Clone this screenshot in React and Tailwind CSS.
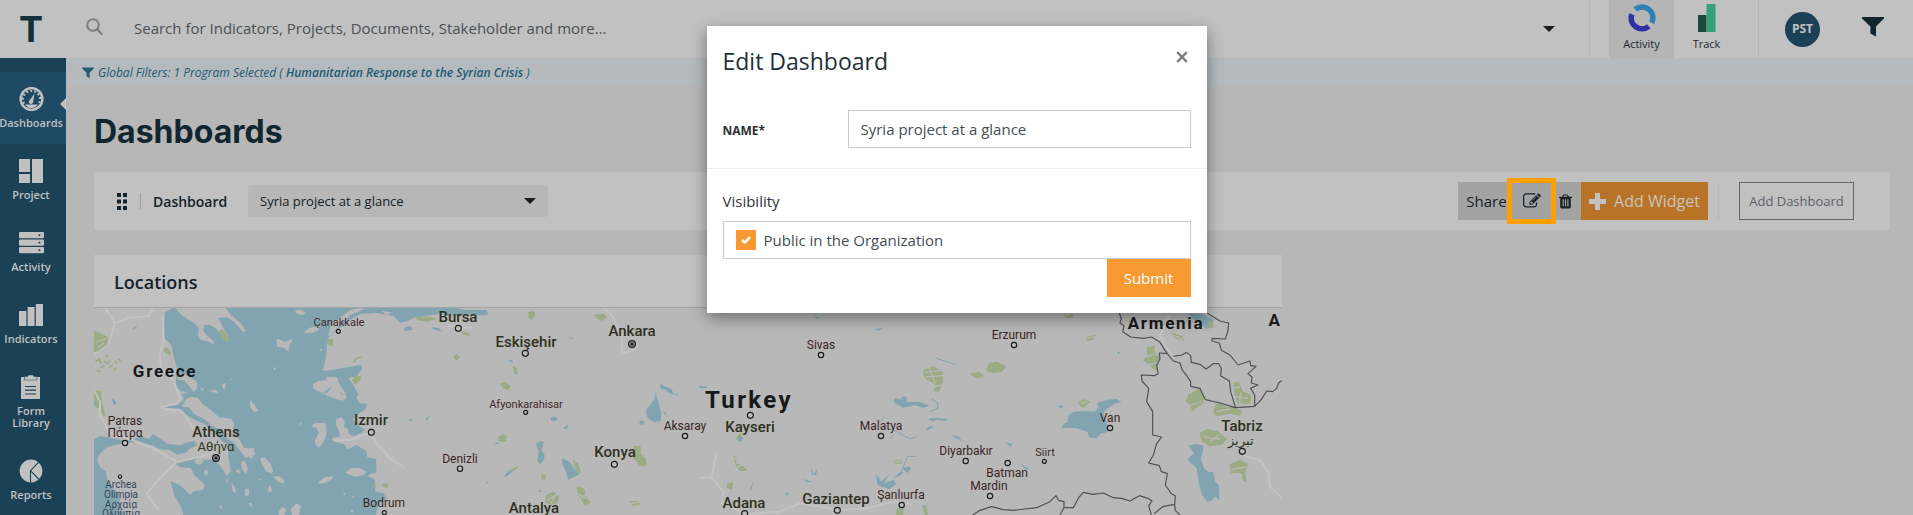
import React from "react";

/* ---------- icons ---------- */

function SearchIcon() {
  return (
    <svg width="18" height="18" viewBox="0 0 18 18" fill="none" stroke="#7d7d7d" strokeWidth="2" aria-hidden="true">
      <circle cx="7" cy="7" r="5.8" />
      <path d="M11.2 11.2 L15.6 16" strokeLinecap="round" />
    </svg>
  );
}

function Funnel({ size, color }) {
  return (
    <svg width={size} height={size} viewBox="0 0 22 22" fill={color} aria-hidden="true">
      <path d="M0 1 H22 V2.4 L14 10.6 V20.6 L8.4 17.4 V10.6 L0 2.4 Z" />
    </svg>
  );
}

function Caret() {
  return (
    <svg width="12" height="6" viewBox="0 0 12 6" fill="#191d1f" aria-hidden="true">
      <path d="M0 0 H12 L6 6 Z" />
    </svg>
  );
}

function GaugeIcon() {
  return (
    <svg width="25" height="24" viewBox="0 0 25 24" fill="none" aria-hidden="true">
      <circle cx="12.5" cy="12" r="10.9" stroke="#c1c1c1" strokeWidth="2.4" />
      <path d="M5 16.6 A8.6 8.6 0 1 1 20 16.6" stroke="#c1c1c1" strokeWidth="2.2" strokeDasharray="2 2.1" />
      <path d="M6 17.6 H19 L16 20.4 Q12.5 21.8 9 20.4 Z" fill="#c1c1c1" />
      <path d="M15.6 6.6 L14.2 14.6 A2.2 2.2 0 1 1 10.8 13 Z" fill="#c1c1c1" />
    </svg>
  );
}

function BlocksIcon() {
  return (
    <svg width="24" height="24" viewBox="0 0 24 24" fill="#c1c1c1" aria-hidden="true">
      <path d="M0 0 H11 V13 H0 Z M0 15 H11 V24 H0 Z M13 0 H24 V24 H13 Z" />
    </svg>
  );
}

function ServerIcon() {
  return (
    <svg width="25" height="24" viewBox="0 0 25 24" aria-hidden="true">
      {[1, 8.5, 16].map((y) => (
        <g key={y}>
          <rect x="0" y={y} width="25" height="6.2" rx="1" fill="#c1c1c1" />
          <rect x="19.6" y={y + 2.3} width="1.7" height="1.7" fill="#1a4156" />
        </g>
      ))}
    </svg>
  );
}

function BarsIcon() {
  return (
    <svg width="24" height="24" viewBox="0 0 24 24" fill="#c1c1c1" aria-hidden="true">
      <path d="M0 8 H7.4 V23 H0 Z M8.6 4 H15.6 V23 H8.6 Z M16.8 1 H24 V23 H16.8 Z" />
    </svg>
  );
}

function ClipboardIcon() {
  return (
    <svg width="20" height="24" viewBox="0 0 20 24" aria-hidden="true">
      <path d="M0 2 H19 V24 H0 Z" fill="#c1c1c1" />
      <path d="M3.6 1.6 H6.4 Q6.8 0 8 0 H11.6 Q12.6 0 13 1.6 H15.8 V5 H3.6 Z" fill="#c1c1c1" stroke="#1a4156" strokeWidth=".5" />
      <path d="M4 11.5 H15 M4 15.2 H15 M4 19 H15" stroke="#1a4156" strokeWidth="1.2" />
    </svg>
  );
}

function PieIcon() {
  return (
    <svg width="24" height="24" viewBox="0 0 24 24" aria-hidden="true">
      <circle cx="12" cy="12" r="11.4" fill="#c1c1c1" />
      <path d="M11.5 24 V11.6 L19.4 3.4 M11.5 11.6 L20 20.4" stroke="#1a4156" strokeWidth="1.1" fill="none" />
    </svg>
  );
}

function ActivityLogo() {
  return (
    <svg width="28" height="28" viewBox="0 0 28 28" fill="none" strokeWidth="5.6" aria-hidden="true">
      <path d="M7.2 5.4 A10.8 10.8 0 0 1 23.6 18.8" stroke="#2f81b3" />
      <path d="M3.9 10.2 A10.8 10.8 0 0 0 20.8 22.4" stroke="#2d32a3" />
    </svg>
  );
}

function TrackLogo() {
  return (
    <svg width="18" height="28" viewBox="0 0 18 28" aria-hidden="true">
      <path d="M0 11 H8.5 V28 H0 Z" fill="#1a4a3c" />
      <path d="M8.5 0 H17.5 V28 H8.5 Z" fill="#34a179" />
    </svg>
  );
}

function GripIcon() {
  return (
    <svg width="10" height="17" viewBox="0 0 10 17" fill="#12222a" aria-hidden="true">
      <path d="M0 0h4v4h-4z M6 0h4v4h-4z M0 6.5h4v4h-4z M6 6.5h4v4h-4z M0 13h4v4h-4z M6 13h4v4h-4z" />
    </svg>
  );
}

function PencilSquareIcon() {
  return (
    <svg width="18" height="18" viewBox="0 0 1792 1792" fill="#1b2226" aria-hidden="true">
      <path d="M888 1184l116-116-152-152-116 116v56h96v96h56zm440-720q-16-16-33 1l-350 350q-17 17-1 33t33-1l350-350q17-17 1-33zm80 594v190q0 119-84.5 203.5t-203.5 84.5h-832q-119 0-203.5-84.5t-84.5-203.5v-832q0-119 84.5-203.5t203.5-84.5h832q63 0 117 25 15 7 18 23 3 17-9 29l-49 49q-14 14-32 8-23-6-45-6h-832q-66 0-113 47t-47 113v832q0 66 47 113t113 47h832q66 0 113-47t47-113v-126q0-13 9-22l64-64q15-15 35-7t20 29zm-96-738l288 288-672 672h-288v-288zm444 132l-92 92-288-288 92-92q28-28 68-28t68 28l152 152q28 28 28 68t-28 68z" />
    </svg>
  );
}

function TrashIcon() {
  return (
    <svg width="13" height="15" viewBox="192 128 1408 1536" fill="#1b2226" aria-hidden="true">
      <path d="M704 1376v-704q0-14-9-23t-23-9h-64q-14 0-23 9t-9 23v704q0 14 9 23t23 9h64q14 0 23-9t9-23zm256 0v-704q0-14-9-23t-23-9h-64q-14 0-23 9t-9 23v704q0 14 9 23t23 9h64q14 0 23-9t9-23zm256 0v-704q0-14-9-23t-23-9h-64q-14 0-23 9t-9 23v704q0 14 9 23t23 9h64q14 0 23-9t9-23zm-544-992h448l-48-117q-7-9-17-11h-317q-10 2-17 11zm928 32v64q0 14-9 23t-23 9h-96v948q0 83-47 143.5t-113 60.5h-832q-66 0-113-58.5t-47-141.5v-952h-96q-14 0-23-9t-9-23v-64q0-14 9-23t23-9h309l70-167q15-37 54-63t79-26h320q40 0 79 26t54 63l70 167h309q14 0 23 9t9 23z" />
    </svg>
  );
}

/* ---------- header ---------- */

function Header() {
  return (
    <header className="flex h-[58px] shrink-0 items-center bg-[#c1c1c1]">
      <a href="#home" aria-label="Home" className="flex w-[66px] shrink-0 justify-center pr-1 font-['Inter',sans-serif] text-4xl leading-none font-bold text-[#12303d]">
        T
      </a>
      <label htmlFor="global-search" className="pb-1 pl-5" aria-label="Search">
        <SearchIcon />
      </label>
      <input
        id="global-search"
        type="text"
        placeholder="Search for Indicators, Projects, Documents, Stakeholder and more..."
        className="ml-[30px] min-w-0 flex-1 bg-transparent pb-[2px] text-[15px] text-[#3c4347] outline-none placeholder:text-[#4a5054]"
      />
      <button type="button" aria-label="Search options" className="mr-[34px] shrink-0">
        <Caret />
      </button>
      <nav className="flex h-full shrink-0 border-x border-[#b6b6b6] px-[19px] text-[11px] leading-4 text-[#1c2a31]">
        <a href="#activity" className="flex h-full w-[65px] flex-col items-center gap-1 bg-[#b5b5b5] pt-1">
          <ActivityLogo />
          Activity
        </a>
        <a href="#track" className="flex h-full w-[65px] flex-col items-center gap-1 pt-1">
          <TrackLogo />
          Track
        </a>
      </nav>
      <button type="button" className="ml-[26px] size-[35px] shrink-0 rounded-full bg-[#1a4156] text-xs font-bold text-[#c1c1c1]">
        PST
      </button>
      <button type="button" aria-label="Filters" className="mr-[29px] ml-[42px] shrink-0 pb-1">
        <Funnel size={22} color="#12262f" />
      </button>
    </header>
  );
}

/* ---------- sidebar ---------- */

const NAV = [
  { label: "Dashboards", icon: GaugeIcon, active: true },
  { label: "Project", icon: BlocksIcon },
  { label: "Activity", icon: ServerIcon },
  { label: "Indicators", icon: BarsIcon },
  { label: "Form Library", icon: ClipboardIcon },
  { label: "Reports", icon: PieIcon },
];

function Sidebar() {
  return (
    <nav className="w-[66px] shrink-0 overflow-hidden bg-[#1a4156] pt-[14px]">
      {NAV.map(({ label, icon: Icon, active }) => (
        <a
          key={label}
          href={"#" + label.toLowerCase().replace(" ", "-")}
          className={
            "relative flex flex-col items-center gap-[6px] py-[15px] pr-1 text-center text-[11px] leading-3 font-semibold text-[#c1c1c1]" +
            (active ? " bg-[#1e4b63]" : "")
          }
        >
          <Icon />
          <span className="w-min">{label}</span>
          {active && (
            <svg width="6" height="12" viewBox="0 0 6 12" className="absolute top-[26px] right-0" aria-hidden="true">
              <path d="M6 0 V12 L0 6 Z" fill="#c1c1c1" />
            </svg>
          )}
        </a>
      ))}
    </nav>
  );
}

/* ---------- toolbar ---------- */

function Toolbar() {
  return (
    <section className="flex h-[58px] items-center bg-[#c1c1c1] pr-9 pl-[23px] text-[15px] text-[#12222a]">
      <GripIcon />
      <span className="ml-[13px] h-4 w-px bg-[#9b9b9b]" />
      <label htmlFor="dashboard" className="ml-3 w-[95px] pt-px text-sm font-semibold">
        Dashboard
      </label>
      <span className="relative flex items-center">
        <select id="dashboard" className="h-8 w-[300px] appearance-none rounded-sm bg-[#b7b7b7] pt-px pl-3 text-[13px]">
          <option>Syria project at a glance</option>
        </select>
        <span className="pointer-events-none absolute right-3">
          <Caret />
        </span>
      </span>
      <div className="ml-auto flex h-[38px] shrink-0">
        <button type="button" className="w-[49px] bg-[#a3a3a3] pl-2">
          Share
        </button>
        <button type="button" aria-label="Edit dashboard" className="relative flex w-[49px] items-center justify-center bg-[#a3a3a3]">
          <PencilSquareIcon />
          <span className="absolute -inset-y-1 inset-x-0 border-[5px] border-[#ffa000]" />
        </button>
        <button type="button" aria-label="Delete dashboard" className="flex w-[25px] items-center bg-[#a3a3a3] pl-[3px]">
          <TrashIcon />
        </button>
        <button type="button" className="flex w-[127px] items-center justify-center gap-2 bg-[#b87326] text-base text-[#c8c4bd]">
          <svg width="17" height="17" viewBox="0 0 17 17" fill="#c1c1c1" aria-hidden="true">
            <path d="M6 0 h5 v6 h6 v5 h-6 v6 h-5 v-6 h-6 v-5 h6 z" />
          </svg>
          Add Widget
        </button>
      </div>
      <span className="ml-[10px] h-[38px] w-px shrink-0 bg-[#b7b7b7]" />
      <button type="button" className="ml-5 h-[38px] w-[115px] shrink-0 border border-[#65656f] pt-px text-[13px] text-[#5f616c]">
        Add Dashboard
      </button>
    </section>
  );
}

/* ---------- map ---------- */

/* The Aegean basin, drawn in its own frame that starts at the map's corner. */
const AEGEAN =
  "235,0 212,14 208,60 213,92 232,112 240,150 250,185 246,218 243,235 262,250 286,256 262,258 270,275 250,290 205,290 200,298 258,302 290,330 335,350 385,400 402,410 403,440 410,490 398,503 380,475 362,455 330,455 305,448 270,462 245,467 258,478 290,480 300,500 333,530 328,545 300,550 288,560 262,535 230,518 240,560 262,600 268,621 853,621 848,608 853,590 878,572 868,555 843,550 843,520 838,500 848,490 846,452 820,448 818,430 788,412 758,425 753,410 718,400 713,390 743,385 758,375 778,385 803,375 813,365 790,350 778,335 793,318 813,305 820,288 796,285 788,270 793,260 778,230 763,210 788,205 803,185 803,170 718,185 686,188 696,150 698,120 703,90 743,55 768,35 798,18 848,15 900,25 918,45 940,40 960,30 960,0";

const GREEK_WATER = [
  "118,395 138,385 165,392 178,378 195,390 222,408 260,412 275,405 300,398 310,412 290,420 275,435 250,440 225,425 200,425 175,412 150,405 130,402",
  "0,392 20,384 40,388 60,392 95,398 118,395 130,402 95,405 60,412 35,420 12,445 10,462 20,480 36,490 40,520 60,545 78,560 75,600 95,621 0,621",
  "0,262 10,268 14,285 0,295",
  "112,66 134,48 122,62",
  "52,270 66,280 66,292 58,288",
];

const WEST_ISLANDS = [
  "245,0 262,22 300,45 315,60 312,80 320,95 345,102 360,110 358,98 340,85 328,68 330,52 345,50 365,60 385,85 398,104 404,95 400,80 388,60 378,40 372,30 400,28 420,42 448,72 455,68 440,45 410,20 395,0",
  "252,200 262,196 285,205 308,222 310,240 298,252 288,236 270,218 252,215",
  "275,275 290,266 312,270 325,288 350,305 375,328 412,332 420,345 418,375 440,400 450,420 478,422 484,440 455,450 440,430 420,405 400,392 385,368 350,352 335,335 300,318 285,298 262,296",
  "348,248 365,245 374,256 355,252",
  "383,230 398,224 390,246",
  "408,212 414,210 410,220",
  "318,238 332,244 322,248",
  "330,490 340,484 342,498 332,500",
  "412,522 424,540 426,556 416,550",
  "440,462 452,458 462,480 456,498 444,484",
  "424,488 438,484 436,500",
  "452,545 464,540 466,560 454,564",
  "395,515 402,512 400,528",
  "376,598 384,590 384,606",
  "300,458 315,450 330,458 318,470 306,466",
  "462,585 474,584 474,600",
];

const EAST_ISLANDS = [
  "135,8 150,4 166,14 158,22 142,18",
  "162,72 178,60 204,54 206,66 190,74 170,76",
  "235,85 242,50 270,30 300,6 330,0 345,2 300,22 270,50 245,80",
  "78,96 84,92 104,102 130,92 118,112 116,132 98,118 82,116",
  "188,228 205,220 228,216 232,206 262,208 268,228 282,248 290,268 278,278 255,272 230,262 205,250 190,242",
  "0,276 12,288 26,308 12,312 0,296",
  "70,178 78,180 72,190",
  "148,342 156,344 150,354",
  "186,350 200,344 228,346 230,376 222,400 208,418 196,410 194,398 206,374 200,360 188,358",
  "258,334 275,328 284,340 282,358 294,362 296,385 270,390 268,372 258,350",
  "0,420 14,420 8,450 0,454",
  "30,452 44,448 62,468 70,490 62,498 48,488 36,470",
  "70,506 88,504 104,518 100,526 84,522",
  "285,494 305,480 330,480 350,492 340,502 315,506",
  "206,522 225,508 250,504 246,514 225,524 208,528",
  "56,534 62,532 66,550 54,554",
  "86,612 95,598 108,602 104,621 86,621",
  "122,604 138,586 152,592 148,621 126,621",
  "280,552 287,556 284,568",
  "305,562 314,566 308,572",
  "208,124 216,122 214,132",
  "26,512 34,512 30,518",
  "352,504 370,494 396,498 392,512 370,512",
  "380,610 400,600 480,600 480,621 378,621",
  "395,8 425,14 410,22",
  "440,2 480,4 480,24 455,20",
  "300,608 310,604 308,616",
];

const WATER = [
  // Sea of Marmara
  "1175,159 1370,159 1395,165 1460,165 1465,180 1340,182 1320,176 1240,188 1190,180",
  "1210,220 1230,212 1240,224 1215,228", "1296,216 1318,220 1325,230 1300,222",
  // Anatolian lakes
  "1965,410 1975,440 1984,478 1982,498 1962,502 1942,488 1938,466 1950,450 1964,432",
  "1980,384 1995,395 2012,400 2022,416 2034,418 2032,422 2006,414 1996,404 1982,402",
  "1920,498 1928,496 1934,504 1926,510 1918,506", "1988,464 2000,478 1996,482",
  "1686,610 1710,622 1722,640 1740,658 1716,668 1704,674 1696,645 1688,630",
  "1608,565 1622,558 1632,560 1624,586 1634,600 1632,614 1622,628 1612,620 1616,590",
  "1512,664 1524,648 1546,638 1552,634 1536,652 1518,666", "1652,490 1660,484 1674,490 1666,498 1654,498",
  "1690,520 1706,506 1700,524", "1482,566 1496,560 1496,568", "1276,492 1292,480 1282,496", "1224,494 1240,492 1232,500",
  "1522,318 1534,314 1542,324", "1704,246 1724,250 1712,252", "2040,190 2034,192 2046,190", "1458,682 1464,680 1466,688",
  "2444,182 2464,190 2450,192", "2412,672 2440,682 2416,680", "2432,640 2442,656 2452,642 2448,660 2436,658", "2262,676 2254,704 2248,706", "2356,712 2366,714 2360,726",
  "2216,540 2230,548 2222,562 2212,556", "1614,706 1626,706 1620,714", "2096,392 2120,394 2118,400 2100,400",
  // Euphrates reservoirs
  "2684,428 2704,434 2706,426 2718,424 2722,442 2758,440 2790,452 2770,458 2744,450 2724,456 2706,458 2694,448 2682,440",
  "2784,492 2800,488 2818,490 2846,492 2838,498 2810,494 2800,500", "2776,524 2790,514 2802,516 2782,526",
  "2852,540 2874,544 2888,560 2866,548", "2628,656 2644,680 2668,658 2650,686 2680,674 2688,688 2668,702 2648,696 2632,688",
  "2682,668 2700,650 2712,652 2700,662", "2706,640 2726,634 2734,642 2722,654",
  "3352,288 3362,294 3352,298", "2624,222 2648,218 2636,228", "3018,562 3038,568 3030,576", "3060,624 3084,640 3080,646",
  // Van
  "3182,520 3192,506 3202,502 3206,480 3222,470 3258,468 3284,470 3296,456 3290,444 3324,434 3350,432 3364,440 3342,448 3320,462 3310,474 3316,490 3324,518 3320,532 3300,536 3290,550 3268,548 3262,530 3224,518",
  "3175,452 3188,450 3190,458 3176,458",
  // Urmia
  "3566,572 3588,566 3610,572 3608,592 3602,610 3612,640 3628,652 3640,650 3646,680 3656,690 3658,736 3646,724 3634,738 3622,740 3606,720 3596,684 3590,640 3562,614 3582,594",
  // Sevan
  "3566,175 3610,176 3640,192 3636,216 3620,222 3600,206 3580,192",
];

const PARKS = [
  "282,228 300,234 324,246 322,272 300,290 282,290", "284,404 304,408 306,440 316,480 308,482 300,456 288,460 282,430",
  "656,226 672,224 686,252 680,262 664,248", "982,252 998,252 1000,270 988,274 980,264", "1056,378 1066,362 1084,364 1080,376 1066,388",
  "1246,186 1280,184 1312,192 1280,200 1252,196", "1360,304 1372,296 1380,308 1368,318", "1384,228 1406,234 1410,242 1390,240",
  "1584,172 1602,168 1606,182 1596,194 1586,190", "1782,180 1812,176 1820,186 1806,198 1790,190", "1500,386 1516,380 1532,394 1526,406 1508,400",
  "1538,332 1552,340 1554,358 1542,356", "1494,545 1508,538 1520,542 1518,558 1504,562 1496,556",
  "1900,572 1922,574 1922,596 1938,612 1942,632 1918,632 1900,610", "1718,614 1734,626 1744,652 1736,656 1726,640", "1520,654 1550,634 1556,636 1540,648",
  "1624,658 1636,660 1636,674 1624,672", "1638,720 1660,710 1678,724 1672,744 1650,750 1636,742", "1730,694 1752,700 1758,724 1772,744 1756,754 1744,736 1734,720",
  "1886,740 1912,738 1924,748 1900,752", "2208,548 2222,534 2240,538 2224,540 2210,556",
  "2200,598 2212,612 2206,628 2226,626 2242,648 2220,648 2206,630", "2182,684 2200,682 2196,704 2180,700",
  "3192,182 3222,178 3220,188 3200,190", "2770,344 2800,334 2828,350 2830,380 2816,410 2800,408 2804,386 2780,374 2770,360", "2908,356 2940,350 2952,366 2930,370",
  "2960,340 2968,324 2990,320 3018,334 3006,350 2980,354 2960,350", "3258,246 3288,238 3282,252 3262,260", "3236,440 3252,432 3270,440 3252,458 3240,454",
  "3440,276 3464,272 3464,290 3480,306 3470,346 3456,340 3450,330 3428,316 3442,302", "3556,440 3566,418 3600,400 3612,426 3610,446 3586,460 3576,472 3572,450",
  "3648,448 3660,444 3680,456 3700,456 3726,468 3720,482 3690,476 3650,484 3638,470", "3598,534 3620,522 3652,528 3682,552 3664,570 3630,574 3606,560",
  "3690,628 3720,614 3744,626 3736,654 3740,680 3730,678 3724,654 3692,654", "3700,382 3716,380 3730,410 3754,420 3750,446 3712,446 3702,410",
  "3514,232 3548,244 3554,258 3524,250", "2676,618 2706,612 2704,626 2684,626", "2690,760 2710,760 2710,780 2688,780", "2766,750 2780,752 2784,780 2774,780",
  "490,284 500,276 514,292 510,302 496,294", "1120,684 1128,686 1126,698 1120,696", "1148,684 1166,686 1162,698 1148,696", "3624,196 3638,200 3640,218 3626,220",
];

const SPECKS =
  "M286 320 l12 -8 l6 14 M300 338 l14 -6 M312 318 l10 8 l8 -10 M326 340 l12 -12 M344 318 l8 8 M356 312 l6 8 M318 300 l8 6 M290 346 l12 4 M340 346 l10 -6 M1060 322 l10 -12 l14 -4";

/* Bare ground that breaks up the patchier woods. */
const CLEARINGS =
  "M286 262 L318 250 M292 280 L312 262 M1640 736 L1676 716 M1650 750 L1664 724 M1732 716 L1764 732 M1736 736 L1760 716 M1886 746 L1920 742 M2204 610 L2240 640 M2206 640 L2230 626 M2774 352 L2826 346 M2778 366 L2830 362 M2786 338 L2806 384 M2800 396 L2826 390 M3260 250 L3286 244 M3244 446 L3262 440 M3436 306 L3470 296 M3444 330 L3476 322 M3700 400 L3720 396 M3704 424 L3744 430 M3724 412 L3718 446 M3612 546 L3660 552 M3630 560 L3656 540 M3650 470 L3690 462 M3574 450 L3604 440 M2680 622 L2704 618 M3518 240 L3550 254 M3694 644 L3738 636";

const ROADS =
  "M315 159 L345 205 L385 188 L445 183 L460 159 M345 205 L325 270 L282 300 M490 180 L490 260 L478 300 L484 340 L520 375 L540 430 L530 446 L480 456 L500 464 L540 466 L560 490 L580 520 M282 405 L300 440 L300 480 L326 530 L400 556 L470 585 L530 620 L490 660 L440 715 L475 765 M530 620 L600 606 L650 590 M1114 532 L1125 560 L1170 610 L1212 636 M1114 532 L1050 555 L1000 556 M1814 160 L1842 190 L1866 250 L1866 290 L1880 294 L1910 280 L1910 265 M2100 668 L2135 668 L2150 590 M2135 668 L2170 710 L2165 745 L2240 778 L2340 770 L2400 745 L2520 765 L2600 760 L2680 740 L2736 748 M3510 180 L3480 240 L3500 280 L3525 310 M3728 600 L3780 616 L3805 650 L3810 695 L3846 730 M1345 210 L1375 218 L1415 218";

const STREAMS =
  "M2682 440 L2694 452 M2796 432 L2814 444 L2812 460 L2790 470 M2638 500 L2656 486 M2650 515 L2690 530 L2730 552 L2750 545 M2808 310 L2866 328 M2700 660 L2722 604 L2750 604 M2670 550 L2680 540";

const BORDERS =
  "M3358 175 L3364 190 L3360 204 L3372 212 L3368 230 L3392 246 L3430 250 L3455 246 L3480 262 L3490 278 L3502 296 L3520 318 L3540 324 L3546 344 L3560 362 L3572 380 L3572 394 L3600 400 L3616 434 L3660 444 L3706 458 L3764 454 L3784 434 L3800 408 L3818 410 L3830 400 L3836 384 L3846 376 M3502 296 L3478 294 L3480 312 L3470 330 L3474 356 L3464 362 L3424 360 L3426 378 L3446 400 L3440 440 L3458 470 L3458 540 L3485 546 L3470 566 L3460 600 L3446 624 L3478 632 L3484 650 L3502 656 L3496 690 L3514 716 L3526 722 L3524 748 L3490 754 L3462 776 M3524 748 L3526 766 L3540 780 M2918 780 L2940 766 L2975 755 L3010 764 L3040 766 L3110 758 L3150 740 L3168 722 L3176 736 L3192 740 L3192 758 L3220 758 L3236 728 L3250 712 L3280 718 L3310 714 L3340 728 L3365 730 L3390 738 L3418 722 L3444 730 L3456 738 L3446 752 L3454 780 M3192 758 L3180 780 M3520 304 L3546 300 L3560 292 L3572 302 L3574 322 L3600 328 L3618 342 L3640 326 L3656 326 L3664 340 L3662 362 L3688 378 L3692 410 L3706 456 M3622 175 L3660 198 L3686 204 L3684 228 L3676 252 L3636 250 L3636 258 L3658 264 L3664 286 L3690 300 L3714 330 L3750 318 L3752 332 L3768 334 L3744 356 L3756 366 L3754 384 L3774 390 L3752 400 L3764 420 L3764 454";

const PINS = [
  [1015, 229, 6], [1375, 220, 9], [1576, 295, 9], [1577, 472, 6], [1114, 532, 9], [375, 564, 8], [360, 665, 5], [1380, 641, 8],
  [1153, 773, 6], [1843, 628, 9], [2055, 543, 8], [2251, 481, 9], [2463, 300, 8], [2234, 776, 9], [2512, 766, 9], [2643, 543, 8],
  [3042, 270, 8], [3330, 519, 8], [2897, 618, 8], [3023, 624, 8], [3133, 619, 6], [2970, 723, 8], [2705, 750, 8], [3727, 589, 9],
];
const CAPITALS = [[648, 609], [1896, 267]];

/* Label centre points, in pixels from the map's top left corner. */
const LABELS = [
  { t: "Greece", x: 71, y: 63, k: "country" },
  { t: "Turkey", x: 655, y: 92, k: "nation" },
  { t: "Armenia", x: 1072, y: 15, k: "country" },
  { t: "A", x: 1181, y: 12, k: "country" },
  { t: "Çanakkale", x: 245, y: 14, k: "small" },
  { t: "Bursa", x: 364, y: 9, k: "city" },
  { t: "Eskişehir", x: 432, y: 34, k: "city" },
  { t: "Ankara", x: 538, y: 23, k: "city" },
  { t: "Afyonkarahisar", x: 432, y: 96, k: "small" },
  { t: "Izmir", x: 277, y: 112, k: "city" },
  { t: "Athens", x: 122, y: 124, k: "city" },
  { t: "Αθήνα", x: 122, y: 138, k: "local" },
  { t: "Patras", x: 31, y: 113, k: "town" },
  { t: "Πάτρα", x: 31, y: 125, k: "town" },
  { t: "Archea", x: 27, y: 177, k: "site" },
  { t: "Olimpia", x: 27, y: 187, k: "site" },
  { t: "Αρχαία", x: 27, y: 197, k: "site" },
  { t: "Ολυμπία", x: 27, y: 206, k: "site" },
  { t: "Denizli", x: 366, y: 151, k: "town" },
  { t: "Bodrum", x: 290, y: 195, k: "town" },
  { t: "Konya", x: 521, y: 144, k: "city" },
  { t: "Antalya", x: 440, y: 200, k: "city" },
  { t: "Aksaray", x: 591, y: 118, k: "town" },
  { t: "Kayseri", x: 656, y: 119, k: "city" },
  { t: "Sivas", x: 727, y: 37, k: "town" },
  { t: "Adana", x: 650, y: 195, k: "city" },
  { t: "Gaziantep", x: 742, y: 191, k: "city" },
  { t: "Malatya", x: 787, y: 118, k: "town" },
  { t: "Erzurum", x: 920, y: 27, k: "town" },
  { t: "Van", x: 1016, y: 110, k: "town" },
  { t: "Diyarbakır", x: 872, y: 143, k: "town" },
  { t: "Siirt", x: 951, y: 144, k: "small" },
  { t: "Batman", x: 913, y: 165, k: "town" },
  { t: "Mardin", x: 895, y: 178, k: "town" },
  { t: "Şanlıurfa", x: 807, y: 187, k: "town" },
  { t: "Tabriz", x: 1148, y: 118, k: "city" },
  { t: "تبریز", x: 1147, y: 132, k: "local" },
];

const LABEL_STYLE = {
  nation: "text-2xl font-bold tracking-widest text-[#16191a]",
  country: "text-[17px] font-bold tracking-widest text-[#16191a]",
  city: "text-[15px] font-medium text-[#2f3120]",
  town: "text-xs text-[#3a2626]",
  small: "text-[11px] text-[#3f2a2c]",
  local: "text-[13px] text-[#33351f]",
  site: "text-[10px] text-[#33475a]",
};

function Shapes({ list, ...group }) {
  return (
    <g {...group}>
      {list.map((points) => (
        <polygon key={points} points={points} />
      ))}
    </g>
  );
}

function MapView() {
  return (
    <div className="relative min-h-0 flex-1 overflow-hidden bg-[#b8b8b8] font-['Roboto','Noto_Sans',sans-serif]">
      <svg width="1188" height="207" viewBox="282 159 3564 621" className="max-w-none" aria-hidden="true">
        <Shapes list={[AEGEAN, ...GREEK_WATER]} transform="translate(282 159)" fill="#82a4b1" />
        <Shapes list={WEST_ISLANDS} transform="translate(282 159)" fill="#b8b8b8" />
        <Shapes list={EAST_ISLANDS} transform="translate(750 159)" fill="#b8b8b8" />
        <Shapes list={["218,254 246,236 232,254", "268,248 282,264 274,260"]} transform="translate(750 159)" fill="#82a4b1" />
        <Shapes list={WATER} fill="#82a4b1" />
        <Shapes list={PARKS} fill="#9bab84" />
        <path d={SPECKS} stroke="#9bab84" strokeWidth="5" fill="none" />
        <path d={CLEARINGS} stroke="#b8b8b8" strokeWidth="4" fill="none" />
        <path d={ROADS} stroke="#c3c3c3" strokeWidth="6" fill="none" strokeLinejoin="round" />
        <path d={STREAMS} stroke="#82a4b1" strokeWidth="3" fill="none" />
        <path d={BORDERS} stroke="#4f5152" strokeWidth="3.5" fill="none" strokeLinejoin="round" />
        <g fill="#bdbdbd" stroke="#1a1c1c" strokeWidth="3.5">
          {PINS.map(([x, y, r]) => (
            <circle key={x} cx={x} cy={y} r={r} />
          ))}
        </g>
        {CAPITALS.map(([x, y]) => (
          <g key={x}>
            <circle cx={x} cy={y} r="10" fill="#a9a9a0" stroke="#1a1c1c" strokeWidth="4" />
            <circle cx={x} cy={y} r="5" fill="#1a1c1c" />
          </g>
        ))}
      </svg>
      {LABELS.map(({ t, x, y, k }) => (
        <span
          key={t}
          className={"absolute -translate-x-1/2 -translate-y-1/2 leading-none whitespace-nowrap " + LABEL_STYLE[k]}
          style={{ left: x, top: y }}
        >
          {t}
        </span>
      ))}
    </div>
  );
}

/* ---------- dialog ---------- */

function EditDialog() {
  return (
    <div className="absolute inset-0 flex items-start justify-center pt-[26px]">
      <form
        role="dialog"
        aria-labelledby="dialog-title"
        onSubmit={(e) => e.preventDefault()}
        className="w-[500px] bg-white text-[15px] text-[#3f474c] shadow-[0_5px_15px_rgba(0,0,0,0.4)]"
      >
        <div className="flex items-start justify-between px-4 pt-[18px]">
          <h2 id="dialog-title" className="text-[23px] leading-[34px] text-[#1f3039]">
            Edit Dashboard
          </h2>
          <button type="button" aria-label="Close" className="p-[3px] pt-[7px]">
            <svg width="12" height="12" viewBox="0 0 12 12" stroke="#7f7f7f" strokeWidth="2.4" aria-hidden="true">
              <path d="M1.2 1.2 L10.8 10.8 M10.8 1.2 L1.2 10.8" />
            </svg>
          </button>
        </div>
        <div className="flex items-center border-b border-[#f1f1f1] px-4 pt-8 pb-5">
          <label htmlFor="name" className="w-[125px] shrink-0 pt-1 text-xs font-bold text-[#2b2f33]">
            NAME*
          </label>
          <input
            id="name"
            type="text"
            defaultValue="Syria project at a glance"
            className="h-[38px] min-w-0 flex-1 border border-[#c8ccd3] px-3 text-[#454d54] outline-none"
          />
        </div>
        <div className="px-4 pt-5 pb-4">
          <p className="pb-2 leading-6 text-[#2f373c]">Visibility</p>
          <label className="flex h-[38px] items-center gap-2 border border-[#c8ccd3] px-3 text-[#454d54]">
            <span className="relative flex size-5 items-center justify-center">
              <input type="checkbox" defaultChecked className="size-5 appearance-none bg-[#f79a31]" />
              <svg width="10" height="8" viewBox="0 0 10 8" fill="none" stroke="#fff" strokeWidth="2.6" className="pointer-events-none absolute" aria-hidden="true">
                <path d="M1 4 L3.8 6.6 L9 1.2" />
              </svg>
            </span>
            Public in the Organization
          </label>
          <div className="flex justify-end">
            <button type="submit" className="h-[38px] w-[84px] bg-[#f79a31] text-white">
              Submit
            </button>
          </div>
        </div>
      </form>
    </div>
  );
}

export default function App() {
  return (
    <div className="relative flex h-screen flex-col overflow-hidden bg-[#b7b7b7] font-['Open_Sans','Noto_Sans',sans-serif]">
      <Header />
      <div className="flex min-h-0 flex-1">
        <Sidebar />
        <main className="flex min-w-0 flex-1 flex-col">
          <p className="flex h-7 shrink-0 items-center gap-1 bg-[#b4babd] pt-[2px] pl-4 text-xs text-[#215b76] italic">
            <Funnel size={12} color="#215b76" />
            <span>
              Global Filters: 1 Program Selected ( <strong className="font-semibold">Humanitarian Response to the Syrian Crisis</strong> )
            </span>
          </p>
          <div className="flex min-h-0 flex-1 flex-col pr-[23px] pl-7">
            <h1 className="pt-[26px] pb-5 font-['Inter',sans-serif] text-[32px] leading-10 font-bold text-[#12262f]">Dashboards</h1>
            <Toolbar />
            <div className="mt-[25px] grid min-h-0 flex-1 grid-cols-3 gap-7">
              <section className="col-span-2 flex min-h-0 flex-col">
                <h2 className="flex h-[53px] shrink-0 items-center border-b border-[#a3a3a3] bg-[#c1c1c1] px-5 pt-[2px] text-lg font-semibold text-[#12222a]">
                  Locations
                </h2>
                <MapView />
              </section>
            </div>
          </div>
        </main>
      </div>
      <EditDialog />
    </div>
  );
}
